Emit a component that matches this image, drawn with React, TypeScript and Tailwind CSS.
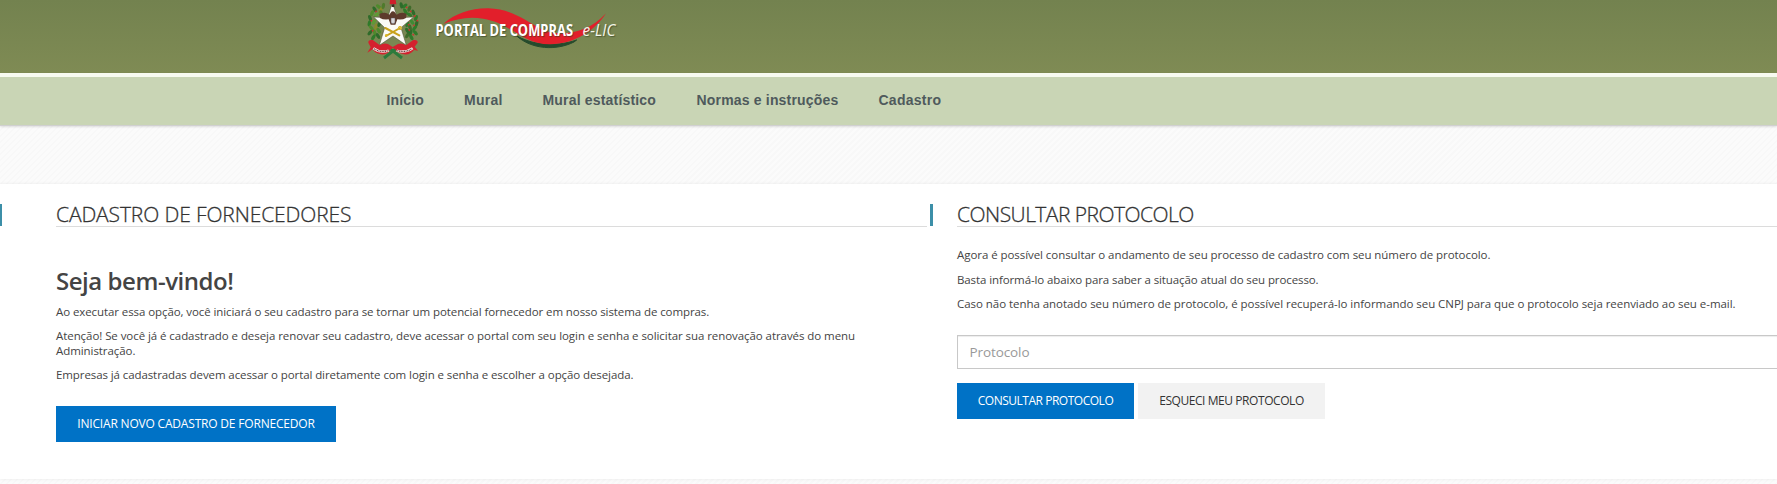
import type { ReactNode } from "react";

const leaves: [number, number, number, string][] = [
  [56, 20, -50, "#4f8a2c"], [44, 28, -30, "#2f6b2a"], [62, 30, 30, "#8a8a2a"], [36, 40, 20, "#4f8a2c"],
  [30, 54, -20, "#2f6b2a"], [42, 66, 35, "#5f9a34"], [28, 70, 10, "#2f7a2a"], [34, 84, -40, "#4f8a2c"],
  [48, 80, 15, "#8a8a2a"], [30, 98, 40, "#2f6b2a"], [44, 98, -15, "#4f8a2c"], [40, 112, 30, "#2f7a2a"],
  [54, 108, -30, "#2f6b2a"], [50, 44, 60, "#5f9a34"], [70, 18, 10, "#4f7a2c"], [58, 72, 20, "#2f6b2a"],
  [56, 92, -30, "#4f8a2c"], [64, 40, -20, "#4f7a2c"],
  [134, 18, 50, "#2f7a2a"], [148, 26, 20, "#3f6b2a"], [136, 34, -30, "#2f7a2a"], [160, 38, -20, "#2f6b2a"],
  [168, 54, 20, "#2f7a2a"], [156, 66, -35, "#3f8a34"], [170, 70, 10, "#2f6b2a"], [164, 84, 40, "#2f7a2a"],
  [150, 82, -15, "#3f6b2a"], [166, 98, -40, "#2f7a2a"], [152, 98, 15, "#2f6b2a"], [154, 112, -30, "#2f7a2a"],
  [142, 106, 30, "#3f6b2a"], [148, 44, -60, "#2f7a2a"], [124, 16, -10, "#2f6b2a"], [142, 72, 20, "#2f7a2a"],
  [142, 92, -30, "#2f6b2a"],
];
const berries: [number, number][] = [
  [140, 22], [152, 34], [164, 48], [146, 62], [162, 76], [148, 90], [160, 104], [146, 74], [172, 62], [34, 62], [38, 92], [48, 34],
];

function Crest() {
  return (
    <g transform="translate(360 0) scale(0.33333)">
      {leaves.map(([x, y, r, c], i) => (
        <ellipse key={i} cx={x} cy={y} rx="5" ry="9.5" fill={c} transform={`rotate(${r} ${x} ${y})`} />
      ))}
      {berries.map(([x, y], i) => (
        <circle key={i} cx={x} cy={y} r="2.8" fill="#c8322c" />
      ))}
      <path d="M72 174 L116 140 M126 174 L82 140" stroke="#2c7a3c" strokeWidth="9" />
      <path d="M97 8 L113 53 L161 51 L123 83 L139 136 L99 108 L58 136 L74 83 L41 51 L83 53 Z" fill="#fbfaf6" stroke="#4a4a30" strokeWidth="1.6" />
      <path d="M58 42 Q76 34 88 44 L92 38 Q98 30 106 38 L110 44 Q124 34 140 42 L138 54 Q128 60 112 58 L106 74 H92 L86 58 Q70 60 60 54 Z" fill="#5d3a2c" />
      <path d="M93 54 h12 v14 q-6 6 -12 0 Z" fill="#d8d6da" stroke="#55505a" strokeWidth="1.5" />
      <path d="M76 84 L118 106 M120 84 L78 108" stroke="#c9a21c" strokeWidth="6" strokeLinecap="round" />
      <circle cx="120" cy="84" r="5" fill="none" stroke="#d9b62c" strokeWidth="3" />
      <circle cx="79" cy="106" r="4" fill="#d9b62c" />
      <path d="M90 0 H107 L109 13 H89 Z" fill="#cf1f2c" />
      <path d="M95 13 h8 v8 h-8 Z" fill="#3b2a20" />
      <path d="M25 128 Q24 118 38 120 L60 136 Q70 128 84 132 L98 141 L114 132 Q126 128 138 136 L160 120 Q174 118 173 128 L164 140 L174 152 L162 150 Q150 166 132 163 Q112 160 106 148 L98 144 L90 150 Q84 165 62 163 Q44 160 38 148 L22 158 L32 142 Z" fill="#d4212e" />
      <path d="M40 145 Q60 160 86 152 M110 152 Q136 160 158 145" fill="none" stroke="#f0dedb" strokeWidth="7.5" />
      <path d="M42 146 Q60 159 84 152 M112 152 Q136 159 156 146" fill="none" stroke="#6a3a3c" strokeWidth="3.5" strokeDasharray="3 2" />
    </g>
  );
}

function Brand() {
  return (
    <svg className="block h-[73px] w-[640px]" viewBox="0 0 640 73" role="img" aria-label="Portal de Compras e-LIC">
      <Crest />
      <g transform="translate(420 0) scale(0.33333)">
        <path d="M288 106 C330 132 400 144 470 120 L462 126 C410 152 335 150 288 106 Z" fill="#254a2c" stroke="#254a2c" strokeWidth="3" />
        <path d="M70 72 C105 40 155 24 205 25 C275 27 315 62 365 88 C410 110 500 106 558 40 C525 92 465 132 390 133 C310 134 270 68 190 56 C145 49 110 56 70 72 Z" fill="#e21f2b" />
      </g>
      <g className="font-['Open_Sans',sans-serif] text-[15.5px] [text-shadow:1px_1px_1px_rgba(50,60,30,0.6)]">
        <text x="435.5" y="36.3" fontWeight="700" fill="#ffffff" textLength="137.5" lengthAdjust="spacingAndGlyphs">PORTAL DE COMPRAS</text>
        <text x="582.5" y="36" fontStyle="italic" fill="#f4f6ea" textLength="33" lengthAdjust="spacingAndGlyphs">e-LIC</text>
      </g>
    </svg>
  );
}

function NavLink({ children, className }: { children: ReactNode; className: string }) {
  return <a href="#" className={`whitespace-nowrap ${className}`}>{children}</a>;
}

function SectionTitle({ children, className }: { children: ReactNode; className: string }) {
  return (
    <h2 className={`h-[23px] whitespace-nowrap border-b border-[#dcdcdc] text-[21px] leading-[21px] font-light text-[#333] [-webkit-text-stroke:0.3px_#333] ${className}`}>
      {children}
    </h2>
  );
}

export default function App() {
  return (
    <div className="flex h-[484px] w-full flex-col overflow-hidden bg-[#fafafa] bg-[repeating-linear-gradient(135deg,#fbfbfb_0px,#fbfbfb_2.5px,#f8f8f8_2.5px,#f8f8f8_4.24px)] font-['Open_Sans',sans-serif]">
      <header className="h-[73px] shrink-0 bg-linear-to-b from-[#73824f] to-[#7f8b54]">
        <Brand />
      </header>
      <nav className="flex h-[53px] shrink-0 items-center border-t-4 border-b border-t-[#f7faf0] border-b-[#d0d0d0] bg-[#c9d5b5] pb-px pl-[386.5px] font-['Liberation_Sans',sans-serif] text-[14px] font-bold text-[#4f5a5c] shadow-[0_1px_2px_rgba(0,0,0,0.12)]">
        <NavLink className="w-[77.5px] tracking-[0.15px]">Início</NavLink>
        <NavLink className="w-[78.5px] tracking-[0.25px]">Mural</NavLink>
        <NavLink className="w-[154px] tracking-[0.18px]">Mural estatístico</NavLink>
        <NavLink className="w-[182px] tracking-[0.18px]">Normas e instruções</NavLink>
        <NavLink className="tracking-[0.25px]">Cadastro</NavLink>
      </nav>

      <main className="mt-[58px] flex h-[295px] shrink-0 bg-white pt-5 text-[11.5px] leading-[15px] text-[#444] shadow-[0_0_3px_rgba(0,0,0,0.08)]">
        <section className="flex w-[930px] shrink-0">
          <div className="h-[22px] w-[2px] bg-[#3c8fa8]" />
          <div className="ml-[54px] w-[871px]">
            <SectionTitle className="tracking-[-0.12px]">CADASTRO DE FORNECEDORES</SectionTitle>
            <h3 className="mt-[39px] text-[24px] leading-[30px] font-semibold tracking-[-0.45px] text-[#444]">Seja bem-vindo!</h3>
            <p className="mt-[8px] tracking-[-0.086px]">Ao executar essa opção, você iniciará o seu cadastro para se tornar um potencial fornecedor em nosso sistema de compras.</p>
            <p className="mt-[9px] tracking-[-0.066px]">
              Atenção! Se você já é cadastrado e deseja renovar seu cadastro, deve acessar o portal com seu login e senha e solicitar sua renovação através do menu
              <br />
              Administração.
            </p>
            <p className="mt-[9px] tracking-[-0.09px]">Empresas já cadastradas devem acessar o portal diretamente com login e senha e escolher a opção desejada.</p>
            <button className="mt-[24px] h-[36px] w-[280px] bg-[#0072c6] pb-px text-[12px] tracking-[-0.19px] whitespace-nowrap text-white">
              INICIAR NOVO CADASTRO DE FORNECEDOR
            </button>
          </div>
        </section>

        <section className="flex min-w-0 flex-1">
          <div className="h-[22px] w-[3px] shrink-0 bg-[#3c8fa8]" />
          <div className="ml-6 flex-1">
            <SectionTitle className="tracking-[-0.53px]">CONSULTAR PROTOCOLO</SectionTitle>
            <p className="mt-[20px] tracking-[-0.06px]">Agora é possível consultar o andamento de seu processo de cadastro com seu número de protocolo.</p>
            <p className="mt-[10px] tracking-[-0.1px]">Basta informá-lo abaixo para saber a situação atual do seu processo.</p>
            <p className="mt-[9px] tracking-[-0.045px]">Caso não tenha anotado seu número de protocolo, é possível recuperá-lo informando seu CNPJ para que o protocolo seja reenviado ao seu e-mail.</p>
            <input
              placeholder="Protocolo"
              className="mt-[24px] block h-[34px] w-full border border-r-0 border-[#c8c8c8] bg-white px-[11.5px] text-[13.5px] tracking-[-0.1px] shadow-[inset_0_1px_1px_rgba(0,0,0,0.075)] placeholder:text-[#999]"
            />
            <div className="mt-[14px] flex gap-1 text-[12px] whitespace-nowrap">
              <button className="h-[36px] w-[177px] bg-[#0072c6] pb-px tracking-[-0.48px] text-white">CONSULTAR PROTOCOLO</button>
              <button className="h-[36px] w-[187px] bg-[#f2f2f2] pb-px tracking-[-0.43px] text-[#333]">ESQUECI MEU PROTOCOLO</button>
            </div>
          </div>
        </section>
      </main>
    </div>
  );
}
